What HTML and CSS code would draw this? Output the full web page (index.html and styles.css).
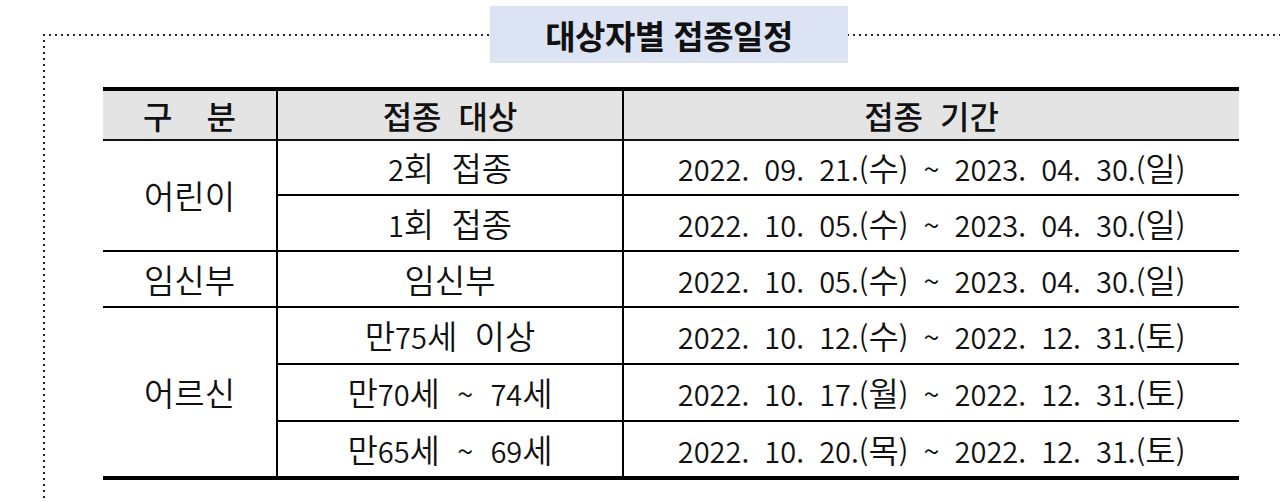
FILE: index.html
```html
<!DOCTYPE html>
<html lang="ko">
<head>
<meta charset="utf-8">
<title>대상자별 접종일정</title>
<link rel="stylesheet" href="styles.css">
</head>
<body>
<section class="frame">
  <h1 class="title">대상자별 접종일정</h1>
  <table class="schedule">
    <colgroup>
      <col class="c-group">
      <col class="c-target">
      <col class="c-period">
    </colgroup>
    <thead>
      <tr>
        <th class="first">구&nbsp;&nbsp;분</th>
        <th>접종 대상</th>
        <th class="last">접종 기간</th>
      </tr>
    </thead>
    <tbody>
      <tr class="short">
        <td class="first" rowspan="2">어린이</td>
        <td><span class="n">2</span>회 접종</td>
        <td class="last date">2022. 09. 21.(<span class="k">수</span>) ~ 2023. 04. 30.(<span class="k">일</span>)</td>
      </tr>
      <tr>
        <td><span class="n">1</span>회 접종</td>
        <td class="last date">2022. 10. 05.(<span class="k">수</span>) ~ 2023. 04. 30.(<span class="k">일</span>)</td>
      </tr>
      <tr>
        <td class="first">임신부</td>
        <td>임신부</td>
        <td class="last date">2022. 10. 05.(<span class="k">수</span>) ~ 2023. 04. 30.(<span class="k">일</span>)</td>
      </tr>
      <tr class="tall">
        <td class="first end" rowspan="3">어르신</td>
        <td>만<span class="n">75</span>세 이상</td>
        <td class="last date">2022. 10. 12.(<span class="k">수</span>) ~ 2022. 12. 31.(<span class="k">토</span>)</td>
      </tr>
      <tr class="tall">
        <td>만<span class="n">70</span>세 <span class="n">~</span> <span class="n">74</span>세</td>
        <td class="last date">2022. 10. 17.(<span class="k">월</span>) ~ 2022. 12. 31.(<span class="k">토</span>)</td>
      </tr>
      <tr class="end">
        <td>만<span class="n">65</span>세 <span class="n">~</span> <span class="n">69</span>세</td>
        <td class="last date">2022. 10. 20.(<span class="k">목</span>) ~ 2022. 12. 31.(<span class="k">토</span>)</td>
      </tr>
    </tbody>
  </table>
</section>
</body>
</html>
```

FILE: styles.css
```css
html, body {
  margin: 0;
  padding: 0;
  background: #ffffff;
}

body {
  font-family: "Noto Sans CJK KR", "Noto Sans", sans-serif;
  color: #111111;
  overflow: hidden;
}

.frame {
  display: flow-root;
  margin: 34px 0 0 43px;
  padding: 0 0 20px 60px;
  background-image:
    linear-gradient(to right, #222 2px, transparent 2px),
    linear-gradient(to bottom, #222 2px, transparent 2px);
  background-size: 6px 2px, 2px 6px;
  background-repeat: repeat-x, repeat-y;
  background-position: 0 0, 0 0;
}

.title {
  margin: -28px 0 0 387px;
  width: 358px;
  height: 57px;
  background: #dce4f4;
  display: flex;
  align-items: center;
  justify-content: center;
  font-size: 33px;
  font-weight: 700;
  letter-spacing: -0.5px;
  color: #111;
}

.schedule {
  margin-top: 24px;
  width: 1136px;
  border-collapse: collapse;
  font-size: 33px;
  word-spacing: 8px;
}

.c-group { width: 174px; }
.c-target { width: 346px; }
.c-period { width: 616px; }

.schedule th {
  height: 48px;
  padding: 0;
  background: #e4e4e4;
  font-size: 32px;
  font-weight: 500;
  border-top: 4px solid #000;
  border-bottom: 2px solid #111;
  border-left: 2px solid #000;
  border-right: 2px solid #000;
  text-align: center;
  line-height: 1;
}

.schedule td {
  height: 54px;
  padding: 0;
  text-align: center;
  font-weight: 350;
  border-bottom: 2px solid #000;
  border-left: 2px solid #000;
  border-right: 2px solid #000;
  line-height: 1;
  white-space: nowrap;
}

.schedule tr.short td {
  height: 53px;
}

.schedule tr.tall td {
  height: 55px;
}

.schedule td.date {
  font-size: 29px;
  word-spacing: 7px;
}

.schedule .n {
  font-size: 29px;
}

.schedule .k {
  font-size: 33px;
}

.schedule .first { border-left: none; }
.schedule .last { border-right: none; }

.schedule td.end,
.schedule tr.end td {
  border-bottom: 4px solid #000;
}
```
